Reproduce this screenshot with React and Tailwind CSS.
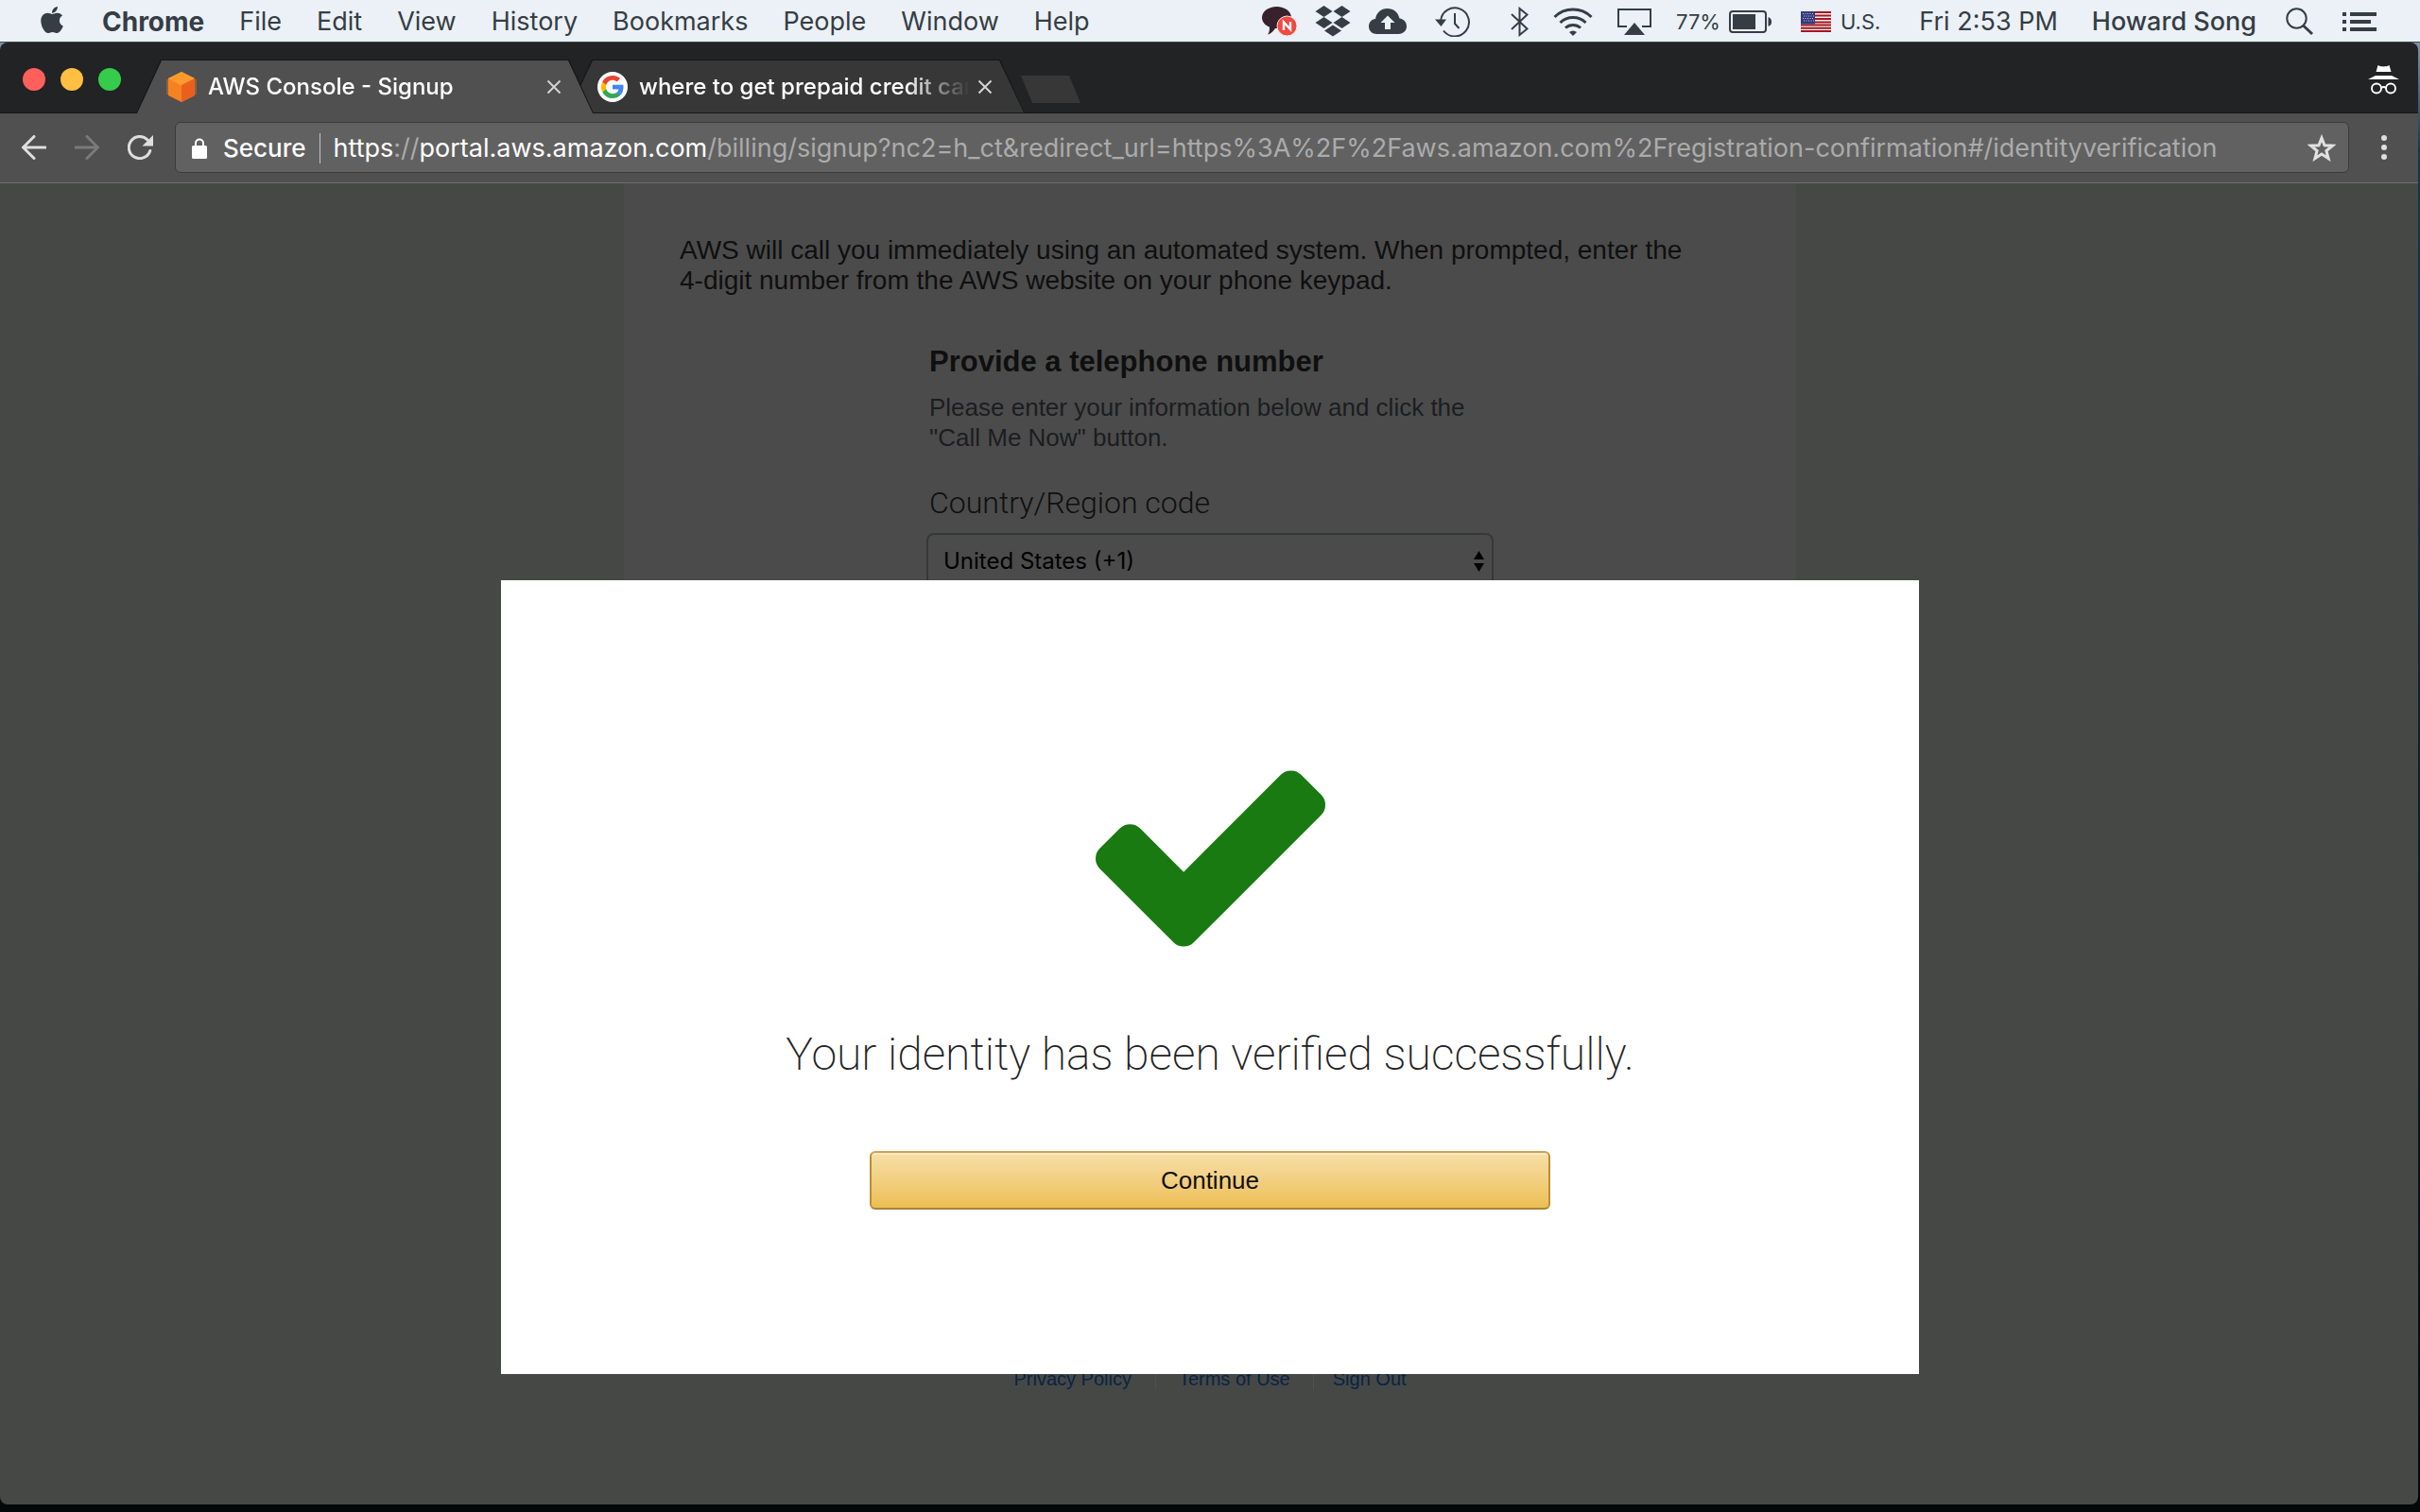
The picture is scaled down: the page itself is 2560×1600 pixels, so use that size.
import { FaApple } from "react-icons/fa";

const ink = "#363d44";

const menus = ["File", "Edit", "View", "History", "Bookmarks", "People", "Window", "Help"];

function ChatIcon() {
  return (
    <svg width="37" height="32" viewBox="0 0 37 32" aria-hidden="true">
      <path d="M15.500 0C24 0 31 5 31 11.500S24 23 15.500 23H14c-2 3-5 6-8 6.500 2-2.500 2.200-5.500 1.800-8C3 19.500 0 16 0 11.500 0 5 7 0 15.500 0z" fill="#37222b" />
      <circle cx="26.500" cy="20.500" r="10.500" fill="#ee4a40" stroke="#f6e9ec" strokeWidth="1" />
      <path d="M23 25v-8.500l7 7.500v-8" fill="none" stroke="#fff" strokeWidth="2.400" />
    </svg>
  );
}

function DropboxIcon() {
  return (
    <svg width="38" height="34" viewBox="0 0 38 34" fill={ink} aria-hidden="true">
      <path d="M9.500 0 18.500 6 9.500 12 .5 6zM28.500 0l9 6-9 6-9-6zM9.500 12l9 6-9 6-9-6zM28.500 12l9 6-9 6-9-6zM19 20.500l9 6-9 6-9-6z" />
    </svg>
  );
}

function CloudIcon() {
  return (
    <svg width="40" height="28" viewBox="0 0 40 28" aria-hidden="true">
      <path d="M8.500 27C3.500 27 0 23.500 0 19c0-4.500 3-7.600 7-8C8 4.500 13 0 19.500 0 26 0 31 4 32.500 10.500 37 11 40 14.500 40 18.800 40 23.500 36.500 27 31.500 27z" fill={ink} />
      <path d="M20 7.500l7.500 7.500h-4.500v7h-6v-7h-4.500z" fill="#ebf1f7" />
    </svg>
  );
}

function TimeMachineIcon() {
  return (
    <svg width="37" height="32" viewBox="0 0 37 32" fill="none" stroke={ink} strokeWidth="2" aria-hidden="true">
      <path d="M6 15A15 15 0 1 1 9 25.500" />
      <path d="M21 7v11l4.500 5" />
      <path d="M0 13.500h12L6.500 21z" fill={ink} stroke="none" />
    </svg>
  );
}

function BluetoothIcon() {
  return (
    <svg width="19" height="32" viewBox="0 0 19 32" fill="none" stroke={ink} strokeWidth="2" aria-hidden="true">
      <path d="M1 8l16.500 15.500L9.500 30V2l8 6.500L1 24" />
    </svg>
  );
}

function WifiIcon() {
  return (
    <svg width="42" height="30" viewBox="0 0 42 30" fill="none" stroke={ink} strokeWidth="3" aria-hidden="true">
      <path d="M1.500 10a28 28 0 0 1 39 0M7.500 16a19.500 19.500 0 0 1 27 0M13 21.500a12 12 0 0 1 16 0" />
      <path d="M21 30l-4-4a6 6 0 0 1 8 0z" fill={ink} stroke="none" />
    </svg>
  );
}

function AirplayIcon() {
  return (
    <svg width="36" height="28" viewBox="0 0 36 28" fill="none" stroke={ink} strokeWidth="2" aria-hidden="true">
      <path d="M10 19H1V1h34v18h-9" />
      <path d="M18 15l11 13H7z" fill={ink} stroke="none" />
    </svg>
  );
}

function BatteryIcon() {
  return (
    <svg width="46" height="24" viewBox="0 0 46 24" aria-hidden="true">
      <rect x="1" y="1" width="38" height="22" rx="3" fill="none" stroke={ink} strokeWidth="2" />
      <rect x="4" y="4" width="24" height="16" fill={ink} />
      <path d="M41.500 7c3 1 3.500 3 3.500 5s-.5 4-3.500 5z" fill={ink} />
    </svg>
  );
}

function FlagIcon() {
  return (
    <svg width="32" height="22" viewBox="0 0 32 22" aria-hidden="true">
      <rect width="32" height="22" fill="#f4eef0" />
      <path d="M0 1h32M0 4.500h32M0 8h32M0 11.500h32M0 14.500h32M0 17.800h32M0 21h32" stroke="#a3171f" strokeWidth="1.900" />
      <rect width="15" height="13.500" fill="#34397a" />
      <path d="M2 2.500h12M3 5h11M2 7.500h12M3 10h11" stroke="#c9cce6" strokeWidth="1" strokeDasharray="1 1.500" />
    </svg>
  );
}

function SearchIcon() {
  return (
    <svg width="30" height="30" viewBox="0 0 30 30" fill="none" stroke={ink} aria-hidden="true">
      <circle cx="11.500" cy="11.500" r="10.200" strokeWidth="2" />
      <path d="M18.500 19l9.500 9" strokeWidth="3" />
    </svg>
  );
}

function ListIcon() {
  return (
    <svg width="36" height="20" viewBox="0 0 36 20" fill={ink} aria-hidden="true">
      <path d="M0 0h4v4H0zM8 0h28v4H8zM0 8h4v4H0zM8 8h22v4H8zM0 16h4v4H0zM8 16h28v4H8z" />
    </svg>
  );
}

function CubeIcon() {
  return (
    <svg width="32" height="32" viewBox="0 0 32 32" className="shrink-0" aria-hidden="true">
      <path d="M16 0l14 7v18l-14 7-14-7V7z" fill="#f58220" />
      <path d="M16 0l14 7-14 8L2 7z" fill="#fe9a2b" />
      <path d="M16 14l14-7v18l-14 7z" fill="#e9601d" />
      <path d="M0 8h2v16H0zM30 8h2v16h-2z" fill="#8b6143" />
    </svg>
  );
}

function GoogleIcon() {
  return (
    <svg width="32" height="32" viewBox="0 0 32 32" className="shrink-0" aria-hidden="true">
      <circle cx="16" cy="16" r="16" fill="#fff" />
      <g transform="translate(4 4)">
        <path fill="#4285f4" d="M23.520 12.270c0-.85-.08-1.660-.22-2.450H12v4.640h6.460a5.520 5.520 0 0 1-2.400 3.620v3h3.880c2.270-2.090 3.580-5.170 3.580-8.810z" />
        <path fill="#34a853" d="M12 24c3.240 0 5.960-1.070 7.940-2.910l-3.880-3.010c-1.070.72-2.450 1.150-4.060 1.150-3.130 0-5.780-2.110-6.730-4.950H1.270v3.110A12 12 0 0 0 12 24z" />
        <path fill="#fbbc05" d="M5.270 14.280a7.200 7.200 0 0 1 0-4.560V6.610h-4a12 12 0 0 0 0 10.780z" />
        <path fill="#ea4335" d="M12 4.770c1.760 0 3.350.61 4.590 1.800l3.450-3.450C17.960 1.190 15.240 0 12 0A12 12 0 0 0 1.270 6.610l4 3.110C6.220 6.880 8.870 4.770 12 4.770z" />
      </g>
    </svg>
  );
}

function CloseIcon() {
  return (
    <svg width="16" height="16" viewBox="0 0 16 16" stroke="#d4d4d4" strokeWidth="2" aria-hidden="true">
      <path d="M1.500 1.500l13 13M14.500 1.500l-13 13" />
    </svg>
  );
}

function IncognitoIcon() {
  return (
    <svg width="33" height="31" viewBox="0 0 33 31" fill="#fff" aria-hidden="true">
      <path d="M10.500 0c2 1.200 4 1.400 6 1.400S20.500 1.200 22.500 0L24.500 7h-16zM8 11h17l8 4H0z" />
      <g fill="none" stroke="#fff" strokeWidth="1.900">
        <circle cx="9" cy="24.500" r="5" />
        <circle cx="24" cy="24.500" r="5" />
        <path d="M14 24q2.500-2 5 0" />
      </g>
    </svg>
  );
}

function MenuBar() {
  return (
    <header className="flex h-[45px] shrink-0 items-center border-b border-[#3f4a55] bg-[#ebf1f7] pt-px pr-[46px] pl-[39px] text-[27px] leading-8 whitespace-nowrap text-[#363d44]">
      <nav className="flex items-center gap-[37px]" aria-label="Application menu">
        <button aria-label="Apple menu" className="-mt-1">
          <FaApple size={32} />
        </button>
        <button className="text-[28px] font-bold">Chrome</button>
        {menus.map((m) => (
          <button key={m}>{m}</button>
        ))}
      </nav>
      <div className="ml-auto flex items-center">
        <div className="flex items-center gap-[19px]">
          <ChatIcon />
          <DropboxIcon />
          <CloudIcon />
        </div>
        <div className="ml-[30px] flex items-center">
          <TimeMachineIcon />
        </div>
        <div className="ml-[43px] flex items-center gap-[26px]">
          <BluetoothIcon />
          <WifiIcon />
          <AirplayIcon />
        </div>
        <div className="ml-[26px] flex items-center gap-[9px] text-[22px]">
          <span>77%</span>
          <BatteryIcon />
        </div>
        <div className="ml-[30px] flex items-center gap-[10px] text-[22px]">
          <FlagIcon />
          <span>U.S.</span>
        </div>
        <span className="ml-[41px]">Fri 2:53 PM</span>
        <span className="ml-[36px] font-medium">Howard Song</span>
        <button aria-label="Search" className="ml-[31px]">
          <SearchIcon />
        </button>
        <button aria-label="Notifications" className="ml-[30px]">
          <ListIcon />
        </button>
      </div>
    </header>
  );
}

function Tab({ icon, title, active }) {
  return (
    <div
      className={
        "relative w-[484px] bg-[#151617] [clip-path:polygon(0_100%,26px_0,458px_0,100%_100%)] " +
        (active ? "z-10" : "-ml-7")
      }
    >
      <div
        className={
          "flex h-full items-center pr-[34px] pl-8 " +
          (active
            ? "bg-[#505050] [clip-path:polygon(1px_100%,27px_1px,457px_1px,483px_100%)]"
            : "bg-[#373737] [clip-path:polygon(1px_56px,27px_1px,457px_1px,483px_56px)]")
        }
      >
        {icon}
        <button className="ml-3 min-w-0 flex-1 overflow-hidden text-left text-[24px] leading-8 font-medium whitespace-nowrap text-white [mask-image:linear-gradient(to_right,black_80%,transparent)]">
          {title}
        </button>
        <button aria-label={"Close " + title} className="ml-2">
          <CloseIcon />
        </button>
      </div>
    </div>
  );
}

function TabStrip() {
  return (
    <div className="flex h-[75px] items-end bg-[#212325] bg-[linear-gradient(to_top,#151617_1px,transparent_1px)] pr-5 pl-6">
      <div className="flex gap-4 pb-6">
        <button aria-label="Close window" className="size-6 rounded-full bg-[#ff605c]" />
        <button aria-label="Minimize window" className="size-6 rounded-full bg-[#ffbf43]" />
        <button aria-label="Zoom window" className="size-6 rounded-full bg-[#35cc4b]" />
      </div>
      <div className="ml-4 flex h-[57px]">
        <Tab active icon={<CubeIcon />} title="AWS Console - Signup" />
        <Tab icon={<GoogleIcon />} title="where to get prepaid credit car" />
      </div>
      <button
        aria-label="New tab"
        className="-ml-1 mb-[11px] h-[29px] w-[63px] bg-[#373737] [clip-path:polygon(0_0,51px_0,100%_100%,12px_100%)]"
      />
      <div className="mb-[20px] ml-auto">
        <IncognitoIcon />
      </div>
    </div>
  );
}

function Toolbar() {
  return (
    <div className="flex items-center border-b border-[#6c6d6c] bg-[#505050] pt-[9px] pr-[33px] pb-[10px] pl-[23px]">
      <div className="flex items-center gap-[30px]">
        <button aria-label="Back">
          <svg width="26" height="26" viewBox="0 0 26 26" fill="none" stroke="#dedede" strokeWidth="3" strokeLinecap="round" strokeLinejoin="round">
            <path d="M13 1.500L1.500 13 13 24.500M2 13h23" />
          </svg>
        </button>
        <button aria-label="Forward">
          <svg width="26" height="26" viewBox="0 0 26 26" fill="none" stroke="#7a7a7a" strokeWidth="3" strokeLinecap="round" strokeLinejoin="round">
            <path d="M13 1.500L24.500 13 13 24.500M24 13H1" />
          </svg>
        </button>
        <button aria-label="Reload">
          <svg width="27" height="26" viewBox="0 0 27 26">
            <path d="M23.800 16.500A11.500 11.500 0 1 1 21 5" fill="none" stroke="#dedede" strokeWidth="3" strokeLinecap="round" />
            <path d="M27 0v11.500H15.500z" fill="#dedede" />
          </svg>
        </button>
      </div>
      <div className="ml-[23px] flex h-[54px] min-w-0 flex-1 items-center rounded-md border border-[#3b3b3b] bg-[#616161] pt-px pr-[13px] pl-[17px]">
        <svg width="16" height="22" viewBox="0 0 16 22" className="shrink-0" aria-hidden="true">
          <rect y="8" width="16" height="14" rx="1.500" fill="#fff" />
          <path d="M4 9V5.500a4 4 0 0 1 8 0V9" fill="none" stroke="#fff" strokeWidth="2" />
        </svg>
        <span className="ml-[17px] text-[26px] leading-8 font-medium text-white">Secure</span>
        <span className="ml-[14px] h-8 w-px bg-[#c4c4c4]" />
        <div
          role="textbox"
          aria-label="Address"
          contentEditable
          suppressContentEditableWarning
          className="ml-[14px] min-w-0 flex-1 overflow-hidden pt-px text-[27px] leading-8 whitespace-nowrap text-[#ababab] outline-none"
        >
          <span className="text-white">https</span>://<span className="text-white">portal.aws.amazon.com</span>
          /billing/signup?nc2=h_ct&amp;redirect_url=https%3A%2F%2Faws.amazon.com%2Fregistration-confirmation#/identityverification
        </div>
        <button aria-label="Bookmark this page">
          <svg width="30" height="29" viewBox="0 0 30 29" fill="none" stroke="#e2e2e2" strokeWidth="3">
            <path d="M15 4l3 7.800 8.400.4-6.500 5.300 2.200 8.200-7.100-4.600-7.100 4.600 2.200-8.200-6.500-5.300 8.400-.4z" />
          </svg>
        </button>
      </div>
      <button aria-label="Browser menu" className="ml-[34px]">
        <svg width="6" height="26" viewBox="0 0 6 26" fill="#dedede">
          <circle cx="3" cy="3" r="3" />
          <circle cx="3" cy="13" r="3" />
          <circle cx="3" cy="23" r="3" />
        </svg>
      </button>
    </div>
  );
}

function SignupForm() {
  return (
    <section className="mx-auto w-full max-w-[1240px] flex-1 bg-[#4b4b4b] px-[59px] pt-[55px]">
      <p className="max-w-[1080px] text-[28px] leading-8 text-[#0f0f0f]">
        AWS will call you immediately using an automated system. When prompted, enter the 4-digit number from the AWS
        website on your phone keypad.
      </p>
      <form className="mx-auto mt-[50px] w-full max-w-[600px]">
        <h2 className="pl-[3px] text-[31px] leading-10 font-bold text-[#0f0f0f]">Provide a telephone number</h2>
        <p className="mt-3 pl-[3px] text-[26px] leading-8 text-[#1c1d20]">
          Please enter your information below and click the "Call Me Now" button.
        </p>
        <label
          htmlFor="country"
          className="mt-[33px] block pl-[3px] font-['Roboto',sans-serif] text-[32px] leading-10 font-light text-[#0f0f0f]"
        >
          Country/Region code
        </label>
        <div className="relative mt-3">
          <select
            id="country"
            className="h-[60px] w-full appearance-none rounded-lg border-2 border-[#343937] bg-[#4b4b4b] px-4 font-['Inter',sans-serif] text-[24px] leading-8 text-black"
          >
            <option>United States (+1)</option>
          </select>
          <svg width="11" height="22" viewBox="0 0 11 22" className="pointer-events-none absolute top-[19px] right-[10px]" aria-hidden="true">
            <path d="M5.500 0L11 9H0zM0 13h11l-5.500 9z" />
          </svg>
        </div>
      </form>
    </section>
  );
}

function VerifiedDialog() {
  return (
    <div className="absolute inset-0 flex items-start justify-center pt-[420px] pl-[2px]">
      <div role="dialog" aria-labelledby="verified" className="flex w-[1500px] flex-col items-center bg-white pt-[201px] pb-[174px]">
        <svg width="243" height="187" viewBox="121 334 1550 1188" fill="#187a10" aria-hidden="true">
          <path d="M1671 566q0 40-28 68l-724 724-136 136q-28 28-68 28t-68-28l-136-136-362-362q-28-28-28-68t28-68l136-136q28-28 68-28t68 28l294 295 656-657q28-28 68-28t68 28l136 136q28 28 28 68z" />
        </svg>
        <h1 id="verified" className="mt-[84px] font-['Roboto',sans-serif] text-[48px] leading-[60px] font-extralight text-[#222]">
          Your identity has been verified successfully.
        </h1>
        <button className="mt-[72px] h-[62px] w-[720px] rounded-md border-2 border-[#b98f34] border-t-[#cba352] border-b-[#a88333] bg-linear-to-b from-[#f7dfa8] to-[#edbe52] text-[26px] leading-8 text-[#111] inset-shadow-[0_2px_0_#fbe9c4]">
          Continue
        </button>
      </div>
    </div>
  );
}

export default function App() {
  return (
    <div className="flex min-h-screen flex-col bg-linear-to-b from-[#7e90a3] from-3% via-[#16344f] via-10% to-[#050808] font-['Inter',sans-serif]">
      <MenuBar />
      <div className="mr-[2px] flex flex-1 flex-col overflow-hidden rounded-lg">
        <TabStrip />
        <Toolbar />
        <main className="relative flex flex-1 flex-col bg-[#464846] pl-[2px] font-['Liberation_Sans',sans-serif]">
          <SignupForm />
          <nav className="mt-[120px] flex items-center justify-center pb-[121px] text-[20px] leading-6 text-[#0a2342]" aria-label="Legal">
            <a href="#privacy" className="border-r border-[#4f504f] pr-[25px]">Privacy Policy</a>
            <a href="#terms" className="border-r border-[#4f504f] px-6">Terms of Use</a>
            <a href="#signout" className="pl-5">Sign Out</a>
          </nav>
          <VerifiedDialog />
        </main>
      </div>
      <div className="h-2 shrink-0 bg-[#050808]" />
    </div>
  );
}
